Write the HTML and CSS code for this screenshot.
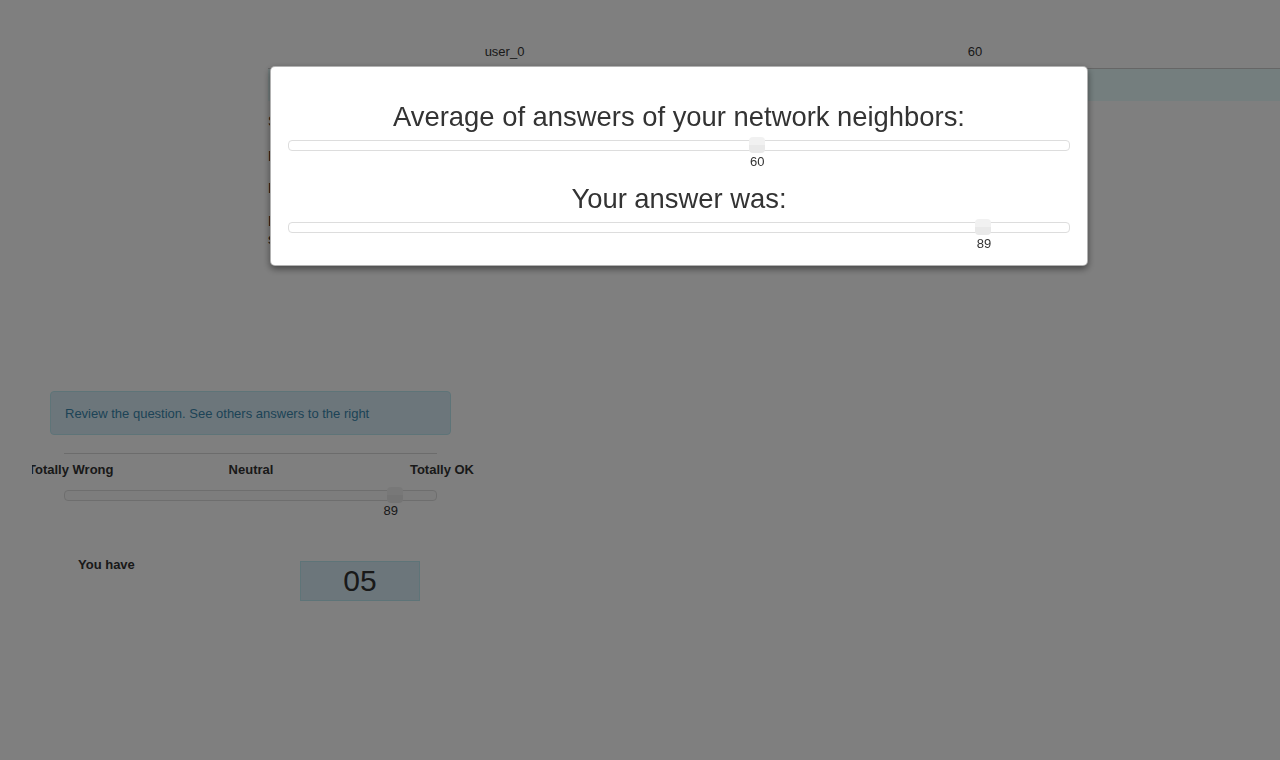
FILE: index.html
```html
<!DOCTYPE html>
<html lang="en">
<head>
<meta charset="utf-8">
<title>Review</title>
<link rel="stylesheet" href="styles.css">
</head>
<body>
<div class="page">
  <div class="results">
    <div class="results-head">
      <div class="cell">user_0</div>
      <div class="cell">60</div>
      <div class="cell"></div>
    </div>
    <div class="results-row">
      <div class="cell"></div>
      <div class="cell"></div>
      <div class="cell"></div>
    </div>
  </div>

  <div class="question">
    <p class="q1">Statement</p>
    <p class="q2">Brazil is the largest country in South America.</p>
    <p class="q3">Do you agree with this statement?</p>
    <p class="q4">Drag the slider to give your answer and<br>submit it when you are ready.</p>
  </div>

  <div class="panel">
    <div class="alert">Review the question. See others answers to the right</div>
    <hr class="rule">
    <div class="scale-clip">
      <div class="scale">
        <span class="scale-left">Totally Wrong</span>
        <span class="scale-mid">Neutral</span>
        <span class="scale-right">Totally OK</span>
      </div>
    </div>
    <div class="slider slider-page">
      <div class="track"><div class="handle" style="left: 89%"></div></div>
      <div class="value"><span style="left: 87.6%">89</span></div>
    </div>
    <div class="timer">
      <span class="timer-label">You have</span>
      <div class="timer-box">05</div>
    </div>
  </div>
</div>

<div class="backdrop"></div>

<div class="modal">
  <h3 class="modal-title">Average of answers of your network neighbors:</h3>
  <div class="slider">
    <div class="track"><div class="handle" style="left: 60%"></div></div>
    <div class="value"><span style="left: 60%">60</span></div>
  </div>
  <h3 class="modal-title second">Your answer was:</h3>
  <div class="slider">
    <div class="track"><div class="handle" style="left: 89%"></div></div>
    <div class="value"><span style="left: 89%">89</span></div>
  </div>
</div>
</body>
</html>
```

FILE: styles.css
```css
* { box-sizing: border-box; }

html, body {
  margin: 0;
  padding: 0;
  background: #ffffff;
}

body {
  font-family: "Liberation Sans", Arial, Helvetica, sans-serif;
  font-size: 13px;
  line-height: 20px;
  color: #333333;
  width: 1280px;
  height: 760px;
  overflow: hidden;
}

.page {
  display: flex;
  flex-direction: column;
}

/* top results table */
.results {
  margin-left: 268px;
  padding-top: 42px;
}

.results-head,
.results-row {
  display: grid;
  grid-template-columns: 473px 468px 1fr;
}

.results-head .cell {
  text-align: center;
  height: 20px;
}

.results-row {
  margin-top: 6px;
  border-top: 1px solid #cccccc;
  background: #e8fcfc;
  height: 33px;
}

/* question text (mostly behind the modal) */
.question {
  margin-left: 268px;
  font-size: 14px;
  color: #3a2a20;
}

.question p { margin: 0; line-height: 20px; }
.question .q1 { margin-top: 10px; }
.question .q2 { margin-top: 15px; }
.question .q3 { margin-top: 12px; }
.question .q4 { margin-top: 14px; line-height: 18px; }

/* left panel */
.panel {
  margin-top: 143px;
  margin-left: 50px;
  width: 401px;
  display: flex;
  flex-direction: column;
}

.alert {
  background: #d9edf7;
  border: 1px solid #bce8f1;
  border-radius: 4px;
  color: #3a87ad;
  padding: 12px 14px 10px;
  line-height: 20px;
}

.rule {
  margin: 18px 14px 0;
  border: 0;
  border-top: 1px solid #d8d8d8;
  height: 0;
}

.scale-clip {
  margin-left: -18px;
  width: 448px;
  overflow: hidden;
  margin-top: 6px;
}

.scale {
  margin-left: -4px;
  width: 446px;
  display: grid;
  grid-template-columns: 1fr auto 1fr;
  font-weight: bold;
  line-height: 20px;
}

.scale-left { text-align: left; white-space: nowrap; }
.scale-mid { text-align: center; }
.scale-right { text-align: right; white-space: nowrap; }

.slider-page {
  margin: 10px 14px 0;
}

.track {
  position: relative;
  height: 11px;
  border: 1px solid #dddddd;
  border-radius: 4px;
  background: #fbfbfb;
}

.handle {
  position: absolute;
  top: -4px;
  width: 16px;
  height: 16px;
  margin-left: -8px;
  border-radius: 4px;
  background: linear-gradient(#f1f1f1 0%, #f1f1f1 50%, #e9e9e9 50%, #e9e9e9 100%);
}

.value {
  position: relative;
  height: 15px;
  margin-top: 2px;
  line-height: 15px;
}

.value span {
  position: absolute;
  top: 0;
  transform: translateX(-50%);
}

.timer {
  display: flex;
  align-items: flex-start;
  margin-top: 37px;
}

.timer-label {
  font-weight: bold;
  margin-left: 28px;
  width: 222px;
  line-height: 20px;
}

.timer-box {
  margin-top: 6px;
  width: 120px;
  height: 40px;
  background: #d9edf7;
  border: 1px solid #bce8f1;
  font-size: 30px;
  line-height: 38px;
  text-align: center;
  color: #333333;
}

/* modal */
.backdrop {
  position: fixed;
  inset: 0;
  background: rgba(0, 0, 0, 0.5);
}

.modal {
  position: fixed;
  left: 270px;
  top: 66px;
  width: 818px;
  height: 200px;
  background: #ffffff;
  border: 1px solid rgba(0, 0, 0, 0.3);
  border-radius: 5px;
  box-shadow: 0 3px 7px rgba(0, 0, 0, 0.45);
  padding: 35px 17px 0;
  display: flex;
  flex-direction: column;
}

.modal-title {
  margin: 0;
  font-size: 27.4px;
  font-weight: normal;
  line-height: 30px;
  text-align: center;
  color: #333333;
}

.modal-title.second {
  margin-top: 15px;
}

.modal .track {
  margin-top: 8px;
  background: #ffffff;
}

.modal .value {
  margin-top: 3px;
}
```
